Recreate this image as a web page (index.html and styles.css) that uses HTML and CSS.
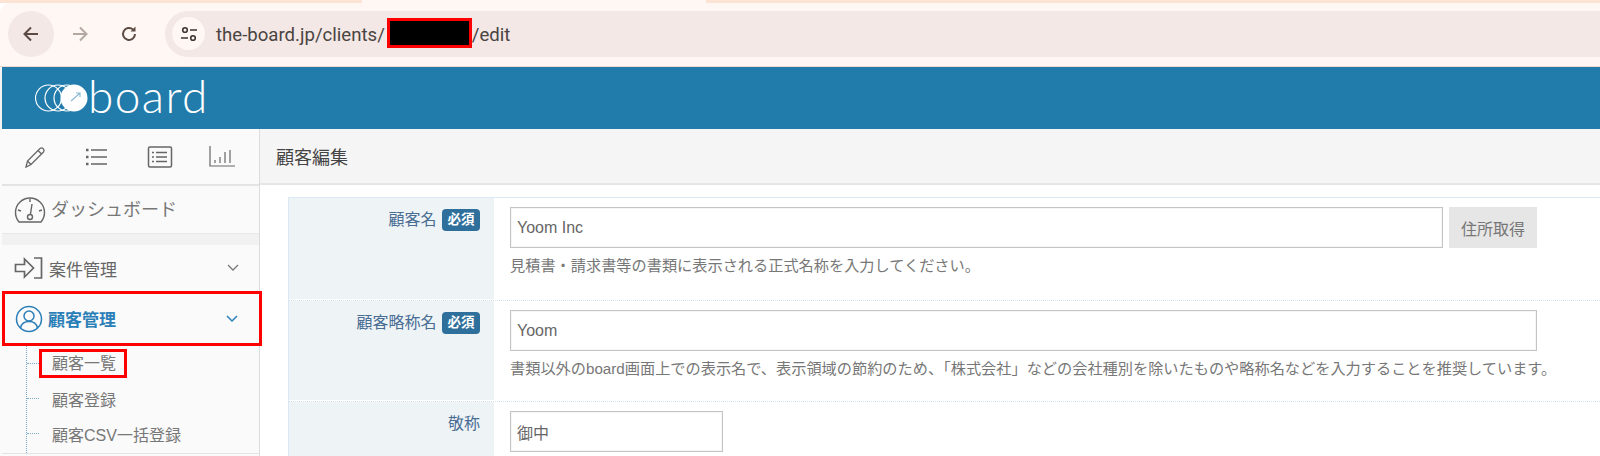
FILE: index.html
```html
<!DOCTYPE html>
<html lang="ja">
<head>
    <meta charset="UTF-8">
    <title>顧客編集 - board</title>
    <link rel="stylesheet" href="styles.css">
</head>
<body>
    <div class="tab-strip">
        <div class="tab-active"></div>
    </div>
    <div class="toolbar">
        <button class="nav-btn active">
            <svg width="20" height="20" viewBox="0 0 20 20" fill="none" stroke="#5c4a44" stroke-width="2"><path d="M17 10H4M10 3.500L3.500 10l6.500 6.500"/></svg>
        </button>
        <button class="nav-btn">
            <svg width="20" height="20" viewBox="0 0 20 20" fill="none" stroke="#b5a8a3" stroke-width="2"><path d="M3 10h13M10 3.500l6.500 6.500-6.500 6.500"/></svg>
        </button>
        <button class="nav-btn">
            <svg width="20" height="20" viewBox="0 0 20 20" fill="none" stroke="#5c4a44" stroke-width="2"><path d="M16 10a6 6 0 1 1-2-4.500"/><path d="M16.500 2.500v5h-5" fill="#5c4a44" stroke="none"/></svg>
        </button>
        <div class="omnibox">
            <span class="site-icon">
                <svg width="18" height="18" viewBox="0 0 18 18" fill="none" stroke="#3d3533" stroke-width="1.600"><circle cx="5" cy="5" r="2.300"/><path d="M10 5h7M1 13h7"/><circle cx="13" cy="13" r="2.300"/></svg>
            </span>
            <span class="url">the-board.jp/clients/</span><span class="redacted"></span><span class="url">/edit</span>
        </div>
    </div>

    <header class="app-header">
        <div class="logo">
            <svg width="53" height="30" viewBox="0 0 53 30" fill="none" stroke="#fff" stroke-width="1.200">
                <circle cx="13.500" cy="15" r="13"/>
                <circle cx="23" cy="15" r="13"/>
                <circle cx="32" cy="15" r="13"/>
                <circle cx="39" cy="15" r="13.500" fill="#fff" stroke="none"/>
                <path d="M36 18l9-8M41 10h4v4" stroke="#8db9d2"/>
            </svg>
            <span class="logo-text">board</span>
        </div>
    </header>

    <div class="main">
        <aside class="sidebar">
            <div class="side-tools">
                <svg width="26" height="26" viewBox="0 0 26 26" fill="none" stroke="#666" stroke-width="1.300"><path d="M4 23l1.500-6L18 4.500a2.500 2.500 0 0 1 3.500 3.500L9 20.500zM5.500 17L9 20.500M16 6.500l3.500 3.500"/></svg>
                <svg width="26" height="26" viewBox="0 0 26 26" fill="none" stroke="#666" stroke-width="1.500"><path d="M7 6h16M7 13h16M7 20h16"/><path d="M2 6h2.500M2 13h2.500M2 20h2.500" stroke-width="2.500"/></svg>
                <svg width="26" height="26" viewBox="0 0 26 26" fill="none" stroke="#666" stroke-width="1.500"><rect x="1.500" y="3" width="23" height="20" rx="1.500"/><path d="M9 8.500h11M9 13h11M9 17.500h11M5 8.500h2M5 13h2M5 17.500h2"/></svg>
                <svg width="26" height="26" viewBox="0 0 26 26" fill="none" stroke="#666" stroke-width="1.200"><path d="M1 2v20h25M6 19v-3M11 19v-6M16 19V8M21 19V6"/></svg>
            </div>
            <a class="side-dash">
                <svg width="32" height="26" viewBox="0 0 32 26" fill="none" stroke="#666" stroke-width="1.400"><path d="M5 25a14.500 14.500 0 1 1 22 0zM16 2v3M4 13l3 1M28 13l-3 1M18 7l-1.500 10"/><circle cx="16" cy="20" r="2.500"/></svg>
                <span class="dash-label">ダッシュボード</span>
            </a>
            <div class="side-gap"></div>
            <a class="side-item">
                <svg width="30" height="24" viewBox="0 0 30 24" fill="none" stroke="#666" stroke-width="1.700"><path d="M1.500 8.500h9V3l9 9-9 9v-5.500h-9zM20 2h7.500v20H20"/></svg>
                <span class="side-label">案件管理</span>
                <svg width="12" height="8" viewBox="0 0 12 8" fill="none" stroke="#777" stroke-width="1.300"><path d="M1 1l5 5 5-5"/></svg>
            </a>
            <a class="side-item current">
                <svg width="28" height="28" viewBox="0 0 28 28" fill="none" stroke="#2b7fb8" stroke-width="1.500"><circle cx="14" cy="14" r="12.500"/><circle cx="14" cy="11" r="5"/><path d="M5.500 23c1-5 4-6.500 8.500-6.500s7.500 1.500 8.500 6.500"/></svg>
                <span class="side-label">顧客管理</span>
                <svg width="12" height="8" viewBox="0 0 12 8" fill="none" stroke="#2b7fb8" stroke-width="1.500"><path d="M1 1l5 5 5-5"/></svg>
            </a>
            <ul class="side-sub">
                <li><span class="marked">顧客一覧</span></li>
                <li>顧客登録</li>
                <li>顧客CSV一括登録</li>
            </ul>
            <div class="side-next"></div>
        </aside>

        <main class="content">
            <div class="page-head">顧客編集</div>
            <div class="form-table">
                <div class="form-row row-name">
                    <div class="form-label">顧客名 <span class="required">必須</span></div>
                    <div class="form-cell">
                        <div class="input-line">
                            <input class="text-input input-name" type="text" value="Yoom Inc">
                            <button class="addr-btn">住所取得</button>
                        </div>
                        <p class="help">見積書・請求書等の書類に表示される正式名称を入力してください。</p>
                    </div>
                </div>
                <div class="form-row row-short">
                    <div class="form-label">顧客略称名 <span class="required">必須</span></div>
                    <div class="form-cell">
                        <input class="text-input input-short" type="text" value="Yoom">
                        <p class="help">書類以外のboard画面上での表示名で、表示領域の節約のため、「株式会社」などの会社種別を除いたものや略称名などを入力することを推奨しています。</p>
                    </div>
                </div>
                <div class="form-row row-title">
                    <div class="form-label">敬称</div>
                    <div class="form-cell">
                        <input class="text-input input-title" type="text" value="御中">
                    </div>
                </div>
            </div>
        </main>
    </div>
</body>
</html>
```

FILE: styles.css
```css
* {
    margin: 0;
    padding: 0;
    box-sizing: border-box;
}

body {
    width: 1600px;
    height: 456px;
    overflow: hidden;
    background: #fff;
    font-family: "Liberation Sans", "Noto Sans CJK JP", sans-serif;
    color: #555;
}

/* browser chrome */
.tab-strip {
    height: 3px;
    background: #fde3d3;
}

.tab-active {
    width: 344px;
    height: 3px;
    margin-left: 362px;
    background: #fef7f3;
}

.toolbar {
    height: 64px;
    padding: 8px 0 10px 8px;
    display: flex;
    align-items: center;
    background: #fef7f3;
    border-radius: 10px 0 0 0;
    border-bottom: 1px solid #f0d9cc;
}

.nav-btn {
    width: 46px;
    height: 46px;
    margin-right: 3px;
    border: none;
    border-radius: 50%;
    background: none;
    display: flex;
    align-items: center;
    justify-content: center;
}

.nav-btn.active {
    background: #f3e8e5;
}

.omnibox {
    flex: 1;
    height: 46px;
    margin-left: 10px;
    padding-left: 7px;
    display: flex;
    align-items: center;
    background: #f3e8e5;
    border-radius: 23px 0 0 23px;
}

.site-icon {
    width: 33px;
    height: 33px;
    margin-right: 11px;
    border-radius: 50%;
    background: #fef7f3;
    display: flex;
    align-items: center;
    justify-content: center;
}

.url {
    margin-top: 3px;
    font-family: Roboto, sans-serif;
    font-size: 18.600px;
    color: #4a4442;
}

.redacted {
    width: 85px;
    height: 30px;
    margin: 0 0 2px 2px;
    background: #000;
    border: 3px solid #f00;
}

/* app header */
.app-header {
    height: 62px;
    padding-left: 33px;
    display: flex;
    align-items: center;
    background: #217bab;
    border-left: 2px solid #f3f3f3;
}

.logo {
    display: flex;
    align-items: center;
}

.logo-text {
    margin-bottom: 5px;
    font-family: Lato, sans-serif;
    font-weight: 300;
    font-size: 46px;
    line-height: 44px;
    letter-spacing: 1.400px;
    color: #fff;
}

/* sidebar */
.main {
    display: flex;
}

.sidebar {
    width: 260px;
    flex: none;
    padding-left: 2px;
    background: #fafafa;
    border-right: 1px solid #ddd;
}

.side-tools {
    height: 57px;
    padding: 0 24px 0 20px;
    display: flex;
    align-items: center;
    justify-content: space-between;
    border-bottom: 2px solid #e4e4e4;
}

.side-dash {
    height: 48px;
    padding-left: 12px;
    display: flex;
    align-items: center;
    gap: 5px;
    font-size: 18px;
    color: #777;
    border-bottom: 1px solid #e8e8e8;
}

.dash-label {
    margin-bottom: 4px;
}

.side-gap {
    height: 11px;
    background: #f1f1f1;
}

.side-item {
    height: 46px;
    padding: 0 20px 0 12px;
    display: flex;
    align-items: center;
    font-size: 17px;
    color: #666;
}

.side-label {
    flex: 1;
    margin-left: 5px;
}

.side-item.current {
    height: 55px;
    border: 3px solid #f00;
    margin-right: -3px;
    color: #2b7fb8;
    font-weight: bold;
    padding-left: 10px;
    padding-right: 21px;
    position: relative;
}

.side-sub {
    list-style: none;
    margin-left: 24px;
    border-left: 1px dotted #7aa9cc;
    height: 107px;
    font-size: 16px;
    color: #777;
}

.side-sub li {
    height: 35px;
    display: flex;
    align-items: center;
}

.side-sub li::before {
    content: "";
    width: 12px;
    margin-right: 13px;
    border-top: 1px dotted #7aa9cc;
}

.marked {
    margin-left: -13px;
    padding: 2px 8px 2px 10px;
    line-height: 19px;
    border: 3px solid #f00;
}

.side-next {
    height: 3px;
    border-top: 1px solid #e4e4e4;
}

/* content */
.content {
    flex: 1;
}

.page-head {
    height: 56px;
    padding-left: 16px;
    display: flex;
    align-items: center;
    font-size: 18px;
    color: #444;
    background: #f5f5f5;
    border-bottom: 2px solid #e6e6e6;
}

.form-table {
    margin: 12px 0 0 28px;
    border-top: 1px solid #dbe9f4;
    border-left: 1px solid #d8e8f4;
}

.form-row {
    display: flex;
    border-bottom: 1px dotted #d5e3ee;
}

.row-name {
    height: 103px;
}

.row-short {
    height: 101px;
}

.row-title {
    height: 60px;
    border-bottom: none;
}

.form-label {
    width: 205px;
    flex: none;
    padding: 8px 14px 0 0;
    height: 100%;
    text-align: right;
    font-size: 16px;
    color: #4a6d94;
    background: #eef3f6;
    border-bottom: 1px solid #fff;
}

.required {
    display: inline-block;
    width: 38px;
    height: 22px;
    margin-left: 1px;
    line-height: 22px;
    text-align: center;
    vertical-align: 1px;
    font-size: 13.500px;
    font-weight: bold;
    color: #fff;
    background: #2f6f9b;
    border-radius: 4px;
}

.form-cell {
    flex: 1;
    padding: 9px 0 0 16px;
}

.input-line {
    display: flex;
    gap: 6px;
}

.text-input {
    display: block;
    height: 41px;
    padding: 0 6px;
    font-family: inherit;
    font-size: 16px;
    color: #666;
    background: #fff;
    border: 1px solid #c4c4c4;
    box-shadow: inset 0 0 0 1px #f6f6f6;
}

.input-name {
    width: 933px;
}

.input-short {
    width: 1027px;
}

.input-title {
    width: 213px;
}

.addr-btn {
    width: 88px;
    height: 41px;
    font-family: inherit;
    font-size: 16px;
    color: #777;
    background: #e6e6e6;
    border: none;
}

.help {
    margin-top: 8px;
    font-size: 15.200px;
    line-height: 20px;
    color: #777;
}
```
